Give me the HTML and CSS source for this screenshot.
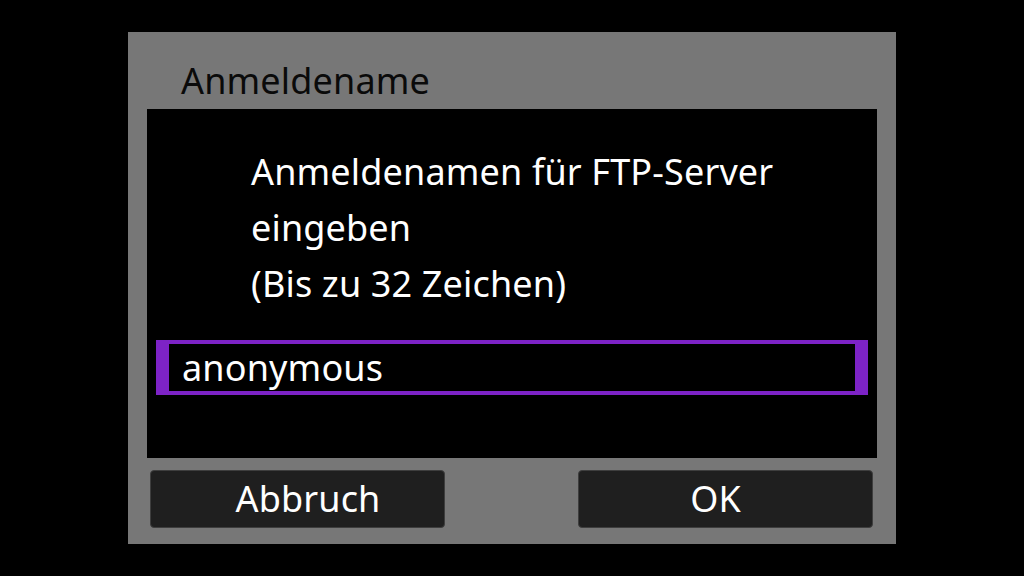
FILE: index.html
```html
<!DOCTYPE html>
<html lang="de">
<head>
<meta charset="utf-8">
<title>Anmeldename</title>
<link rel="stylesheet" href="styles.css">
</head>
<body>
<div class="dialog">
  <div class="title">Anmeldename</div>
  <div class="panel">
    <div class="message">
      <div class="line">Anmeldenamen für FTP-Server</div>
      <div class="line">eingeben</div>
      <div class="line">(Bis zu 32 Zeichen)</div>
    </div>
    <div class="input">anonymous</div>
  </div>
  <div class="buttons">
    <div class="btn btn-cancel">Abbruch</div>
    <div class="btn btn-ok">OK</div>
  </div>
</div>
</body>
</html>
```

FILE: styles.css
```css
* { box-sizing: border-box; }
html, body {
  margin: 0;
  padding: 0;
  background: #000;
  width: 1024px;
  height: 576px;
  overflow: hidden;
}
body {
  font-family: "Noto Sans", "Open Sans", sans-serif;
  font-size: 36px;
  letter-spacing: 0.15px;
}
.dialog {
  width: 768px;
  height: 512px;
  margin: 32px 0 0 128px;
  background: #777777;
  display: flex;
  flex-direction: column;
}
.title {
  padding: 21px 0 0 53px;
  height: 77px;
  line-height: 56px;
  color: #0a0a0a;
}
.panel {
  margin: 0 19px 0 19px;
  height: 349px;
  background: #000;
  padding: 35px 9px 0 9px;
}
.message {
  padding-left: 95px;
  color: #fff;
  line-height: 56px;
}
.input {
  margin-top: 28px;
  height: 55px;
  border-style: solid;
  border-color: #7d23c6;
  border-width: 4px 13px;
  color: #fff;
  line-height: 47px;
  padding-left: 13px;
}
.buttons {
  display: flex;
  justify-content: space-between;
  padding: 12px 23px 0 22px;
}
.btn {
  width: 295px;
  height: 58px;
  background: #1f1f1f;
  border: 1px solid #3e3e3e;
  border-radius: 4px;
  color: #fff;
  text-align: center;
  line-height: 56px;
}
.btn-cancel { padding-left: 21px; }
.btn-ok { padding-right: 20px; }
```
